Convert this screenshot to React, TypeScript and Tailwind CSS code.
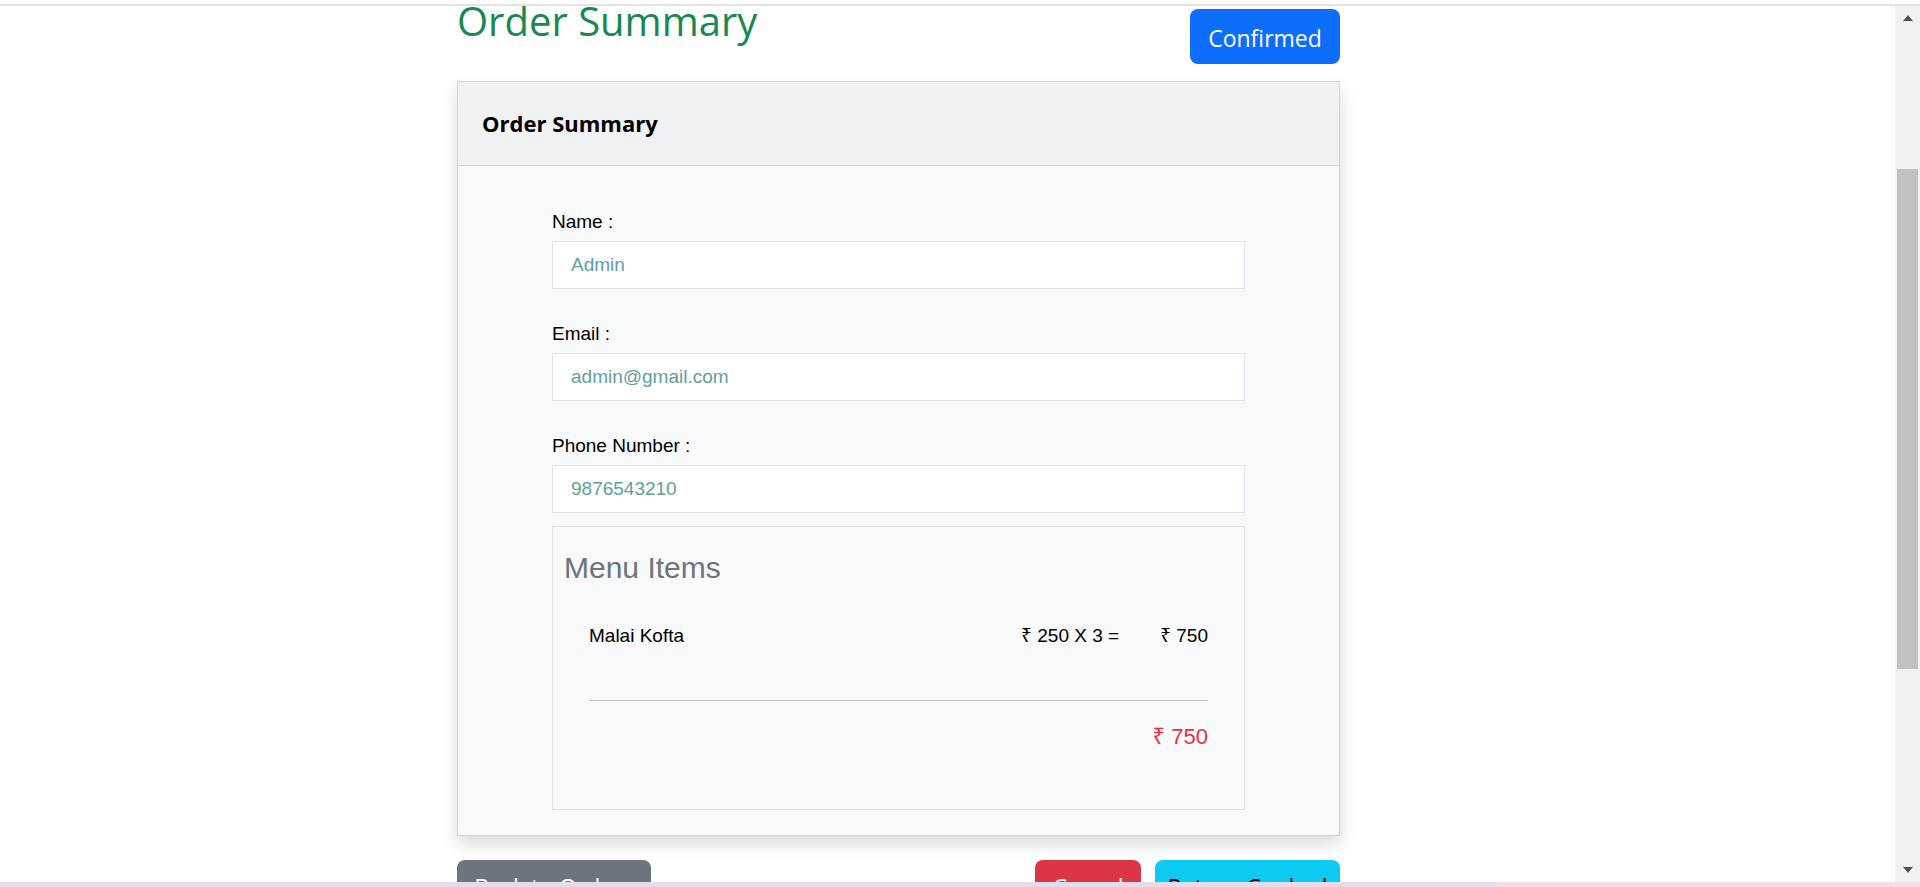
const sans = { fontFamily: '"Open Sans", "Noto Sans", sans-serif' };
const arial = { fontFamily: '"Liberation Sans", "Noto Sans", "DejaVu Sans", sans-serif' };

const fields = [
  { label: "Name :", value: "Admin" },
  { label: "Email :", value: "admin@gmail.com" },
  { label: "Phone Number :", value: "9876543210" },
];

function Scrollbar() {
  return (
    <div className="w-[25px] shrink-0 bg-[#f1f1f1] flex flex-col">
      <div className="h-[24px] flex items-center justify-center">
        <svg width="10" height="6" viewBox="0 0 10 6">
          <polygon points="5,0 10,6 0,6" fill="#505050" />
        </svg>
      </div>
      <div className="flex-1">
        <div className="mt-[139px] mx-[2px] h-[500px] bg-[#c1c1c1]" />
      </div>
      <div className="h-[24px] flex items-center justify-center">
        <svg width="10" height="6" viewBox="0 0 10 6">
          <polygon points="0,0 10,0 5,6" fill="#505050" />
        </svg>
      </div>
    </div>
  );
}

export default function App() {
  return (
    <div className="h-[887px] w-full overflow-hidden bg-white flex flex-col">
      <div className="h-[6px] shrink-0 border-b-2 border-[#e3e3e3]" />

      <div className="flex flex-1 min-h-0">
        <main className="flex-1 overflow-hidden pl-[457px]">
          <div className="w-[883px]">
            <div className="flex items-start justify-between">
              <h1 className="-mt-[9px] text-[40px] leading-[48px] text-[#198754]" style={sans}>
                Order Summary
              </h1>
              <button
                className="mt-[3px] w-[150px] h-[55px] pt-[3px] rounded-[8px] bg-[#0d6efd] text-white text-[23px]"
                style={sans}
              >
                Confirmed
              </button>
            </div>

            <div className="mt-[17px] border border-[#d4d4d4] shadow-[0_8px_16px_rgba(0,0,0,0.15)]">
              <div className="h-[84px] bg-[#f0f1f3] border-b border-[#d4d4d4] flex items-center px-[24px]">
                <h5 className="text-[22px] font-bold text-black" style={sans}>
                  Order Summary
                </h5>
              </div>

              <div className="bg-[#f8f9fa] px-[94px] pt-[42px] pb-[25px]" style={arial}>
                {fields.map((f, i) => (
                  <div key={f.label} className={i === 0 ? "" : "mt-[31px]"}>
                    <label className="block text-[19px] leading-[28px] text-black mb-[5px]">{f.label}</label>
                    <div className="h-[48px] bg-white border border-[#dee2e6] flex items-center px-[18px] text-[19px] text-[#5f9ea0]">
                      {f.value}
                    </div>
                  </div>
                ))}

                <div className="mt-[13px] border border-[#dee2e6] px-[11px] pt-[23px] pb-[56px]">
                  <h3 className="text-[30px] leading-[36px] text-[#6c757d]">Menu Items</h3>
                  <div className="mx-[25px]">
                    <div className="mt-[36px] flex justify-between text-[19px] leading-[28px] text-black">
                      <span>Malai Kofta</span>
                      <div className="flex gap-[41px]">
                        <span>₹ 250 X 3 =</span>
                        <span>₹ 750</span>
                      </div>
                    </div>
                    <hr className="mt-[50px] border-0 border-t border-[#bfc1c4]" />
                    <div className="mt-[19px] text-right text-[22px] leading-[33px] text-[#dc3545]">₹ 750</div>
                  </div>
                </div>
              </div>
            </div>

            <div className="mt-[24px] flex justify-between text-[23px]" style={sans}>
              <button className="w-[194px] h-[55px] rounded-[8px] bg-[#6c757d] text-white">Back to Orders</button>
              <div className="flex gap-[14px]">
                <button className="w-[106px] h-[55px] rounded-[8px] bg-[#dc3545] text-white">Cancel</button>
                <button className="w-[185px] h-[55px] rounded-[8px] bg-[#0dcaf0] text-black">Return Cooked</button>
              </div>
            </div>
          </div>
        </main>
        <Scrollbar />
      </div>

      <div className="h-[5px] shrink-0 flex">
        <div className="w-[1496px] bg-[#e3dcec]" />
        <div className="flex-1 bg-[#f5dde3]" />
      </div>
    </div>
  );
}
